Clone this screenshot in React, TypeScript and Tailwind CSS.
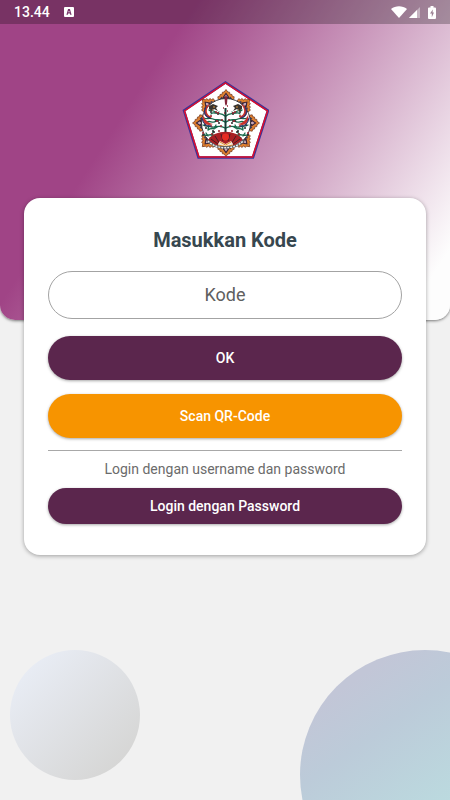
function Ornament({ angle }: { angle: number }) {
  return (
    <g transform={`rotate(${angle} 51 48)`}>
      <path
        d="M51 14.500l1.800 2.500 1.800.2.200 2 2.200.3.200 1.700 2 .6-.5 2.700h-15.400l-.5-2.700 2-.6.2-1.700 2.200-.3.2-2 1.800-.2z"
        fill="#e0812f"
      />
      <path
        d="M51 14.500l1.800 2.500 1.800.2.200 2 2.200.3.200 1.700 2 .6-.5 2.700M51 14.500l-1.800 2.500-1.800.2-.2 2-2.200.3-.2 1.700-2 .6.500 2.700"
        fill="none"
        stroke="#6b3018"
        strokeWidth=".7"
      />
      <path d="M51 17.500l2.500 3.500 2 3h-9l2-3z" fill="#3a2438" />
      <path d="M51 19.500l1.500 2-1.500 2.500-1.500-2.500z" fill="#c9a8b8" />
      <path d="M45 24l1.500-2.500 1 2.500zM57 24l-1.500-2.500-1 2.500z" fill="#27345f" />
    </g>
  );
}

function Branches() {
  return (
    <>
      <g fill="none" stroke="#176a4c" strokeWidth="1.300" strokeLinecap="round">
        <path d="M50 59c-5-2-8 2-12 1s-6 1-9 0M50 53c-6-4-9 0-13-1s-6 0-9-2M50 47c-5-4-8-1-12-3s-6 1-9-1M50 41c-4-4-7-1-10-4s-4 0-6-2" />
        <path d="M33 55c3-3 6 0 9-3M32 47c3-2 6 2 9-1M36 39c2-3 6 1 8-2M35 63c3-3 6 0 8-3M31 58l2 3M38 57l-1 4M34 50l-1 4M41 50l-2 4" />
      </g>
      <path
        d="M30 53h2m5 3h2m4-8h2m-11-5h2m6 3h2m-9-9h2m5 2h2m-15 11h2m7 7h2m-13 3h2m11-14h2"
        stroke="#272b2b"
        strokeWidth="1.500"
      />
      <path
        d="M35 41h2m5-3h2m2 7h2m-7 1h2m-8 5h2m8 0h2m-11 8h2m5-3h2m-18 2h2m11-21h2"
        stroke="#9c2430"
        strokeWidth="1.500"
      />
      <path d="M35 29c-7 3-8 10-3 13 2 1 4 1 5 0-6-2-7-7-2-13z" fill="#c8332c" />
      <path d="M28 40c-2 7 3 12 10 9-5-1-8-4-10-9z" fill="#c8332c" />
      <path d="M31 32c-3 5-1 10 4 11M27 43c1 6 5 9 9 8" fill="none" stroke="#293470" strokeWidth="1.200" />
      <path d="M34 31l4-2 5 2-2 2 2 3-4-2-2 2-3-2z" fill="#39332d" />
      <path d="M38 32h2m-3 3h1" stroke="#d3903a" />
    </>
  );
}

function Emblem() {
  return (
    <svg viewBox="6 5 88 80" className="h-20 w-[88px]" role="img" aria-label="Logo">
      <path d="M50.500 7.500L93 35.500 78 82.500H23.500L9 35.500z" fill="#fff" stroke="#39349b" strokeWidth="2.500" />
      <path d="M50.500 8L92.500 36 77.500 82H24L9.500 36z" fill="none" stroke="#dc0e2c" strokeWidth="1.500" />
      {[0, 45, 90, 135, 180, 225, 270, 315].map((angle) => (
        <Ornament key={angle} angle={angle} />
      ))}
      <circle cx="51" cy="48" r="24.500" fill="#fff" stroke="#35343a" strokeWidth="1" />
      <Branches />
      <g transform="matrix(-1 0 0 1 101 0)">
        <Branches />
      </g>
      <path d="M50.500 33v29" stroke="#173d34" strokeWidth="2" />
      <path d="M51 20l1.500 3-.5 6-1 2-1-2-.5-6z" fill="#82243a" />
      <path d="M48 33h1m3-2h1m-4 7h1m2-2h1" stroke="#962837" strokeWidth="1.500" />
      <path d="M33 65c7-11 28-11 35 0l-9 6H42z" fill="#a91f24" />
      <path d="M36 64l7 5m-3-8l5 8m1-10l2 7m17-2l-7 5m3-8l-5 8m-1-10l-2 7" stroke="#461d23" strokeWidth="1" />
      <circle cx="50.500" cy="62" r="3.500" fill="#e72d24" />
      <path d="M43 69l2-3 5.500 3 5.500-3 2 3v2l-7.500 1-7.500-1z" fill="#f6e4dc" />
      <path d="M43 70l7.500 1.500 7.500-1.500M45 67l5.500 3 5.500-3" stroke="#e4932a" strokeWidth="1" fill="none" />
      <path d="M32 65c8 10 29 10 37 0" fill="none" stroke="#55575b" strokeWidth="2.500" />
      <path d="M33 66c8 9 27 9 35 0" fill="none" stroke="#ededed" strokeWidth="1.500" strokeDasharray="2 1" />
    </svg>
  );
}

function StatusBar() {
  return (
    <div className="flex h-6 items-center justify-between bg-black/25 px-3.5 text-white">
      <div className="flex items-center gap-3.5">
        <span className="text-sm font-medium">13.44</span>
        <svg viewBox="0 0 10 10" className="size-2.5" aria-hidden="true">
          <rect width="10" height="10" rx="1" fill="currentColor" />
          <path d="M3 7.800L4.500 2.500h1L7 7.800M3.600 5.800h2.800" fill="none" stroke="#78356a" strokeWidth="1.200" />
        </svg>
      </div>
      <div className="flex items-center" aria-hidden="true">
        <svg viewBox="0 0 16 12" className="h-3 w-4" fill="currentColor">
          <path d="M0 3C4.500-.8 11.500-.8 16 3L8 12z" />
        </svg>
        <svg viewBox="0 0 11 11" className="ml-0.5 size-[11px]" fill="currentColor">
          <path d="M11 0v11H0z" opacity=".4" />
          <path d="M8 3v8H0z" />
        </svg>
        <svg viewBox="0 0 8 13" className="ml-2 h-[13px] w-2">
          <path d="M2.500 0h3v1.500H7q1 0 1 1V12q0 1-1 1H1q-1 0-1-1V2.500q0-1 1-1h1.500z" fill="currentColor" />
          <path d="M4.800 3.500L2 7.500h1.800v3.700L6 6.500H4.600z" fill="#9b7f92" />
        </svg>
      </div>
    </div>
  );
}

const pill =
  "block w-full rounded-full text-sm font-medium text-white shadow-[0_1px_3px_rgba(0,0,0,0.35)]";

export default function App() {
  return (
    <div className="flex min-h-screen flex-col overflow-hidden bg-[#f1f1f1] font-['Roboto',sans-serif]">
      <header className="h-80 rounded-b-[15px] bg-[linear-gradient(123deg,#a04486_30%,#fdfdfd_93%)] shadow-[0_1px_3px_rgba(0,0,0,0.5)]">
        <StatusBar />
        <div className="flex justify-center pt-14">
          <Emblem />
        </div>
      </header>

      <main className="relative mx-6 -mt-[122px] rounded-2xl bg-white px-6 pt-7 pb-[31px] shadow-[0_1px_4px_rgba(0,0,0,0.35)]">
        <form onSubmit={(e) => e.preventDefault()}>
          <h1 className="text-center text-xl leading-7 font-bold text-[#37474f]">
            <label htmlFor="kode">Masukkan Kode</label>
          </h1>
          <input
            id="kode"
            type="text"
            placeholder="Kode"
            className="mt-[17px] block h-12 w-full rounded-full border border-[#a3a3a3] bg-white px-6 pb-0.5 text-center text-lg text-[#333333] outline-none placeholder:text-[#606060]"
          />
          <button type="submit" className={`${pill} mt-[17px] h-11 bg-[#5b264d]`}>
            OK
          </button>
          <button type="button" className={`${pill} mt-3.5 h-11 bg-[#f79400]`}>
            Scan QR-Code
          </button>
          <hr className="mt-3 border-[#a8a8a8]" />
          <p className="mt-1.5 text-center text-sm leading-6 text-[#6b6b6b]">
            Login dengan username dan password
          </p>
          <button type="button" className={`${pill} mt-[7px] h-9 bg-[#5b264d]`}>
            Login dengan Password
          </button>
        </form>
      </main>

      <footer className="mt-auto flex h-[150px] items-start justify-between overflow-hidden pl-2.5" aria-hidden="true">
        <div className="size-[130px] shrink-0 rounded-full bg-[linear-gradient(135deg,#e8ecf4_14%,#d6d6d5_86%)]" />
        <div className="-mr-[100px] size-[250px] shrink-0 rounded-full bg-[linear-gradient(145deg,#c2c6d7_16%,#bccbd9_32%,#bbdde0_66%)]" />
      </footer>
    </div>
  );
}
